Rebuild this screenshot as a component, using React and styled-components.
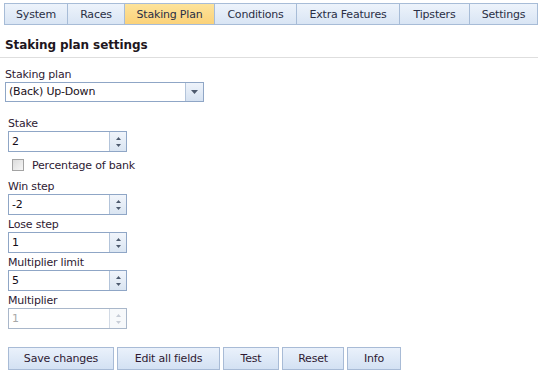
import React from "react";
import styled, { createGlobalStyle } from "styled-components";

const GlobalStyle = createGlobalStyle`
  html, body {
    margin: 0;
    padding: 0;
    background: #fff;
  }
  body {
    font-family: "DejaVu Sans", Verdana, sans-serif;
    font-size: 11px;
    letter-spacing: -0.2px;
    color: #2e1a33;
  }
`;

const tabs = [
  { name: "System", width: 64 },
  { name: "Races", width: 57 },
  { name: "Staking Plan", width: 90, active: true },
  { name: "Conditions", width: 82 },
  { name: "Extra Features", width: 103 },
  { name: "Tipsters", width: 70 },
  { name: "Settings", width: 68 },
];

const Page = styled.div`
  width: 538px;
  height: 374px;
  overflow: hidden;
`;

const TabBar = styled.div`
  display: flex;
  margin: 3px 0 0 4px;
  height: 22px;
`;

const Tab = styled.div`
  box-sizing: border-box;
  width: ${(p) => p.$w}px;
  height: 22px;
  display: flex;
  align-items: center;
  justify-content: center;
  border: 1px solid #a7bcd7;
  border-left-width: ${(p) => (p.$first ? 1 : 0)}px;
  background: ${(p) =>
    p.$active
      ? "linear-gradient(#fde39a, #fbd27a)"
      : "linear-gradient(#edf3fb, #d9e5f4)"};
  color: #2a2f45;
  white-space: nowrap;
`;

const Heading = styled.h2`
  margin: 12px 0 0;
  padding: 0 0 4px 5px;
  font-size: 12px;
  line-height: 16px;
  font-weight: bold;
  letter-spacing: -0.1px;
  color: #1e1620;
  border-bottom: 1px solid #dedede;
`;

const Form = styled.div`
  display: flex;
  flex-direction: column;
  align-items: flex-start;
  padding: 10px 0 0 8px;
`;

const Label = styled.div`
  line-height: 14px;
  height: 14px;
  margin-left: ${(p) => (p.$shift ? -3 : 0)}px;
`;

const Field = styled.div`
  display: flex;
  flex-direction: column;
  margin-bottom: ${(p) => p.$mb ?? 3}px;
`;

const SelectBox = styled.div`
  box-sizing: border-box;
  margin-left: -3px;
  width: 199px;
  height: 20px;
  display: flex;
  border: 1px solid #8fa6c6;
  background: #fff;
`;

const SelectText = styled.div`
  flex: 1;
  padding-left: 3px;
  line-height: 18px;
  color: #1a1020;
`;

const DropButton = styled.div`
  width: 17px;
  display: flex;
  align-items: center;
  justify-content: center;
  border-left: 1px solid #b3c4da;
  background: linear-gradient(#eef3fa, #d6e2f1);
`;

const Spinner = styled.div`
  box-sizing: border-box;
  width: 119px;
  height: 21px;
  display: flex;
  border: 1px solid ${(p) => (p.$disabled ? "#a9b7ca" : "#8fa6c6")};
  background: #fff;
`;

const SpinValue = styled.div`
  flex: 1;
  padding-left: 3px;
  line-height: 19px;
  color: ${(p) => (p.$disabled ? "#a8a8a8" : "#140c18")};
`;

const SpinButtons = styled.div`
  width: 16px;
  display: flex;
  flex-direction: column;
  align-items: center;
  justify-content: center;
  gap: 4px;
  border-left: 1px solid ${(p) => (p.$disabled ? "#d2dae5" : "#b3c4da")};
  background: ${(p) =>
    p.$disabled ? "#f7f9fb" : "linear-gradient(#f1f5fb, #dae5f2)"};
`;

const CheckRow = styled.label`
  display: flex;
  align-items: center;
  gap: 8px;
  height: 14px;
  margin: 6px 0 8px 4px;
`;

const CheckBox = styled.span`
  box-sizing: border-box;
  width: 12px;
  height: 12px;
  border: 1px solid #a3a3a3;
  background: linear-gradient(135deg, #dcdcdc, #f6f6f6);
`;

const ButtonRow = styled.div`
  display: flex;
  gap: 3px;
  margin-top: 18px;
`;

const Button = styled.button`
  box-sizing: border-box;
  width: ${(p) => p.$w}px;
  height: 23px;
  padding: 0;
  font-family: inherit;
  font-size: 11px;
  letter-spacing: -0.2px;
  color: #2e1a33;
  border: 1px solid #a8bbd6;
  background: linear-gradient(#eaf1fb, #d3e1f3);
`;

const Arrow = ({ up, color = "#4d5a6e" }) => (
  <svg width="5" height="3" viewBox="0 0 5 3">
    <polygon points={up ? "0,3 5,3 2.5,0" : "0,0 5,0 2.5,3"} fill={color} />
  </svg>
);

const NumberField = ({ label, value, disabled, mb }) => (
  <Field $mb={mb}>
    <Label>{label}</Label>
    <Spinner $disabled={disabled}>
      <SpinValue $disabled={disabled}>{value}</SpinValue>
      <SpinButtons $disabled={disabled}>
        <Arrow up color={disabled ? "#c6ccd6" : "#4d5a6e"} />
        <Arrow color={disabled ? "#c6ccd6" : "#4d5a6e"} />
      </SpinButtons>
    </Spinner>
  </Field>
);

const buttons = [
  { text: "Save changes", w: 106 },
  { text: "Edit all fields", w: 103 },
  { text: "Test", w: 56 },
  { text: "Reset", w: 62 },
  { text: "Info", w: 54 },
];

export default function App() {
  return (
    <Page>
      <GlobalStyle />
      <TabBar>
        {tabs.map((t, i) => (
          <Tab key={t.name} $w={t.width} $active={t.active} $first={i === 0}>
            {t.name}
          </Tab>
        ))}
      </TabBar>
      <Heading>Staking plan settings</Heading>
      <Form>
        <Field $mb={15}>
          <Label $shift>Staking plan</Label>
          <SelectBox>
            <SelectText>(Back) Up-Down</SelectText>
            <DropButton>
              <svg width="7" height="4" viewBox="0 0 7 4">
                <polygon points="0,0 7,0 3.5,4" fill="#4d5a6e" />
              </svg>
            </DropButton>
          </SelectBox>
        </Field>
        <NumberField label="Stake" value="2" mb={0} />
        <CheckRow>
          <CheckBox />
          <span>Percentage of bank</span>
        </CheckRow>
        <NumberField label="Win step" value="-2" />
        <NumberField label="Lose step" value="1" />
        <NumberField label="Multiplier limit" value="5" />
        <NumberField label="Multiplier" value="1" disabled mb={0} />
        <ButtonRow>
          {buttons.map((b) => (
            <Button key={b.text} $w={b.w}>
              {b.text}
            </Button>
          ))}
        </ButtonRow>
      </Form>
    </Page>
  );
}
